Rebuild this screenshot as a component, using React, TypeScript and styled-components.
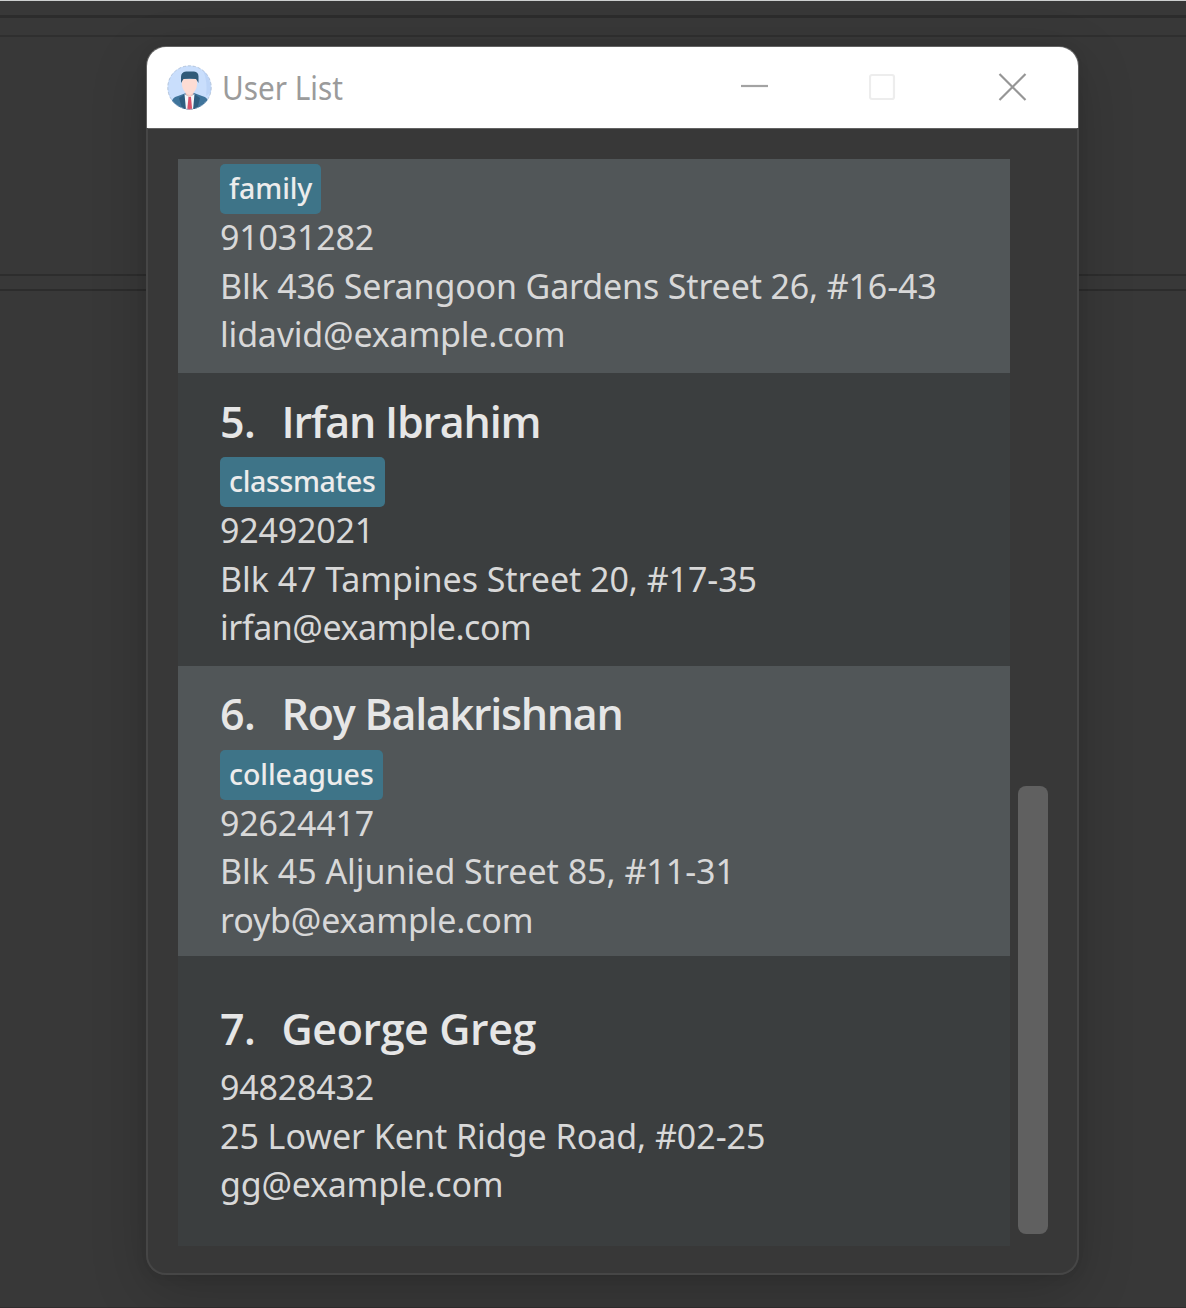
import React from "react";
import styled, { createGlobalStyle } from "styled-components";

const GlobalStyle = createGlobalStyle`
  * { box-sizing: border-box; }
  body {
    margin: 0;
    background: #383838;
    font-family: "Noto Sans", "Open Sans", sans-serif;
  }
`;

const Desktop = styled.main`
  display: grid;
  width: 1186px;
  height: 1308px;
  overflow: hidden;
  background: #383838;
`;

const Backdrop = styled.div`
  grid-area: 1 / 1;
  display: flex;
  flex-direction: column;
  border-top: 1px solid #cdd0d0;
  border-bottom: 1px solid #302d2e;
`;

const Band = styled.div<{ $height: number; $edge: number; $tone: string }>`
  flex: none;
  height: ${(p) => p.$height}px;
  border-bottom: ${(p) => p.$edge}px solid ${(p) => p.$tone};
`;

const Window = styled.section`
  grid-area: 1 / 1;
  z-index: 1;
  display: flex;
  flex-direction: column;
  width: 933px;
  height: 1229px;
  margin: 46px 0 0 146px;
  border-radius: 20px;
  background: #383838;
  box-shadow: 0 16px 56px rgba(0, 0, 0, 0.19), 0 2px 12px rgba(0, 0, 0, 0.08);
`;

const TitleBar = styled.header`
  flex: none;
  display: flex;
  align-items: center;
  height: 81px;
  margin: 1px 1px 0;
  padding: 0 51px 1px 20px;
  border-radius: 19px 19px 0 0;
  background: #fff;
  box-shadow: 0 0 0 1px #626262;
`;

const Avatar = styled.svg`
  flex: none;
  width: 45px;
  height: 45px;
`;

const Title = styled.h1`
  flex: 1;
  margin: 1px 0 0 10px;
  color: #9b9b9b;
  font-size: 33px;
  font-weight: 400;
  line-height: 46px;
  white-space: nowrap;
  transform: scaleX(0.9);
  transform-origin: left;
`;

const Controls = styled.div`
  display: flex;
  gap: 100px;
`;

const ControlIcon = styled.svg<{ $tone: string }>`
  width: 29px;
  height: 29px;
  fill: none;
  stroke: ${(p) => p.$tone};
  stroke-width: 2.2;
`;

const Body = styled.div`
  flex: 1;
  min-height: 0;
  display: flex;
  gap: 8px;
  padding: 31px 29px 27px 30px;
  border: 2px solid #464646;
  border-top: 0;
  border-radius: 0 0 20px 20px;
`;

const List = styled.div`
  display: flex;
  flex-direction: column;
  width: 832px;
  height: 1087px;
  overflow: hidden;
`;

const Cell = styled.article<{ $height: number; $top: number; $light?: boolean }>`
  flex: none;
  display: flex;
  flex-direction: column;
  align-items: flex-start;
  height: ${(p) => p.$height}px;
  padding: ${(p) => p.$top}px 42px 0;
  background: ${(p) => (p.$light ? "#515658" : "#3b3e3f")};
`;

const Name = styled.h2<{ $track?: number }>`
  display: flex;
  margin: 0 0 7.5px;
  color: #e6e6e6;
  font-family: "Open Sans", "Noto Sans", sans-serif;
  font-size: 43px;
  font-weight: 600;
  line-height: 57px;
  letter-spacing: ${(p) => p.$track ?? 0}px;
  white-space: nowrap;
`;

const Index = styled.span`
  width: 61.5px;
  letter-spacing: -0.6px;
`;

const Tag = styled.span<{ $track?: number }>`
  height: 50px;
  padding: 0 9px;
  border-radius: 5px;
  background: #3e7488;
  color: #ececec;
  font-size: 28.5px;
  font-weight: 500;
  line-height: 49px;
  letter-spacing: ${(p) => p.$track ?? 0}px;
`;

const Details = styled.div`
  margin-top: -0.8px;
`;

const Line = styled.p<{ $track?: number }>`
  margin: 0;
  color: #d8d8d8;
  font-size: 34px;
  line-height: 48.6px;
  letter-spacing: ${(p) => p.$track ?? -0.2}px;
  white-space: nowrap;
`;

const ScrollTrack = styled.div`
  display: flex;
  align-items: flex-end;
  width: 30px;
  padding-bottom: 12px;
`;

const ScrollThumb = styled.div`
  width: 30px;
  height: 448px;
  border-radius: 8px;
  background: #606060;
`;

type Spaced = { text: string; track: number };

type Person = {
  index?: number;
  name?: Spaced;
  tag?: Spaced;
  phone: string;
  address: Spaced;
  email: Spaced;
  height: number;
  top: number;
};

const people: Person[] = [
  {
    tag: { text: "family", track: -0.1 },
    phone: "91031282",
    address: { text: "Blk 436 Serangoon Gardens Street 26, #16-43", track: -0.15 },
    email: { text: "lidavid@example.com", track: -0.2 },
    height: 214,
    top: 5,
  },
  {
    index: 5,
    name: { text: "Irfan Ibrahim", track: -1.2 },
    tag: { text: "classmates", track: -0.35 },
    phone: "92492021",
    address: { text: "Blk 47 Tampines Street 20, #17-35", track: -0.06 },
    email: { text: "irfan@example.com", track: -0.46 },
    height: 292.5,
    top: 19.5,
  },
  {
    index: 6,
    name: { text: "Roy Balakrishnan", track: -1.25 },
    tag: { text: "colleagues", track: -0.05 },
    phone: "92624417",
    address: { text: "Blk 45 Aljunied Street 85, #11-31", track: -0.03 },
    email: { text: "royb@example.com", track: -0.17 },
    height: 290.5,
    top: 19.5,
  },
  {
    index: 7,
    name: { text: "George Greg", track: -0.4 },
    phone: "94828432",
    address: { text: "25 Lower Kent Ridge Road, #02-25", track: -0.04 },
    email: { text: "gg@example.com", track: -0.22 },
    height: 290,
    top: 43.5,
  },
];

function AvatarIcon() {
  return (
    <Avatar viewBox="0 0 45 45">
      <defs>
        <clipPath id="face"><circle cx="22.5" cy="22.5" r="22" /></clipPath>
      </defs>
      <g clipPath="url(#face)">
        <rect width="45" height="45" fill="#c9defc" />
        <path d="M36 5q8 8 8 22l-5 4q2-14-3-26Z" fill="#bcd4f7" />
        <path d="M5 36q1-4 6-5l8-3h8l8 3q5 1 6 5v10H5Z" fill="#3f749b" />
        <path d="M12 33l6-4 3.500 16h-6ZM33 33l-6-4-3 16h6Z" fill="#2f5d80" />
        <path d="M17.500 29l5 3 5-3-1.500 16h-7Z" fill="#f4f7fb" />
        <path d="M18.500 24h8v5l-4 4-4-4Z" fill="#f8cdc4" />
        <path d="M15 14h15v6q-.5 7-7.500 10-7-3-7.500-10Z" fill="#fddcd4" />
        <path d="M14 18V12q0-5 5-5.500h8q4.500.5 4.500 5V18l-2.500-4q-6-.6-12.500 0Z" fill="#315a78" />
        <path d="M21.500 32h2.500l1.200 13h-5Z" fill="#d9536a" />
      </g>
      <circle cx="22.500" cy="22.500" r="21.700" fill="none" stroke="#a9b8cc" strokeWidth=".7" strokeDasharray="3 2" />
    </Avatar>
  );
}

export default function App() {
  return (
    <>
      <GlobalStyle />
      <Desktop>
        <Backdrop>
          <Band $height={17} $edge={3} $tone="#2c2c2c" />
          <Band $height={19} $edge={2} $tone="#2f2f2f" />
          <Band $height={239} $edge={2} $tone="#2d2d2d" />
          <Band $height={15} $edge={2} $tone="#2c2c2c" />
        </Backdrop>
        <Window>
          <TitleBar>
            <AvatarIcon />
            <Title>User List</Title>
            <Controls>
              <ControlIcon $tone="#a3a3a3" viewBox="0 0 29 29"><path d="M1 13h27" /></ControlIcon>
              <ControlIcon $tone="#ededed" viewBox="0 0 29 29"><rect x="1" y="2" width="24" height="24" rx="2" /></ControlIcon>
              <ControlIcon $tone="#969696" viewBox="0 0 29 29"><path d="M1.500 1l26 26M27.500 1l-26 26" /></ControlIcon>
            </Controls>
          </TitleBar>
          <Body>
            <List>
              {people.map((p, i) => (
                <Cell key={p.phone} $height={p.height} $top={p.top} $light={i % 2 === 0}>
                  {p.name && (
                    <Name $track={p.name.track}>
                      <Index>{p.index}.</Index>
                      {p.name.text}
                    </Name>
                  )}
                  {p.tag && <Tag $track={p.tag.track}>{p.tag.text}</Tag>}
                  <Details>
                    <Line>{p.phone}</Line>
                    <Line $track={p.address.track}>{p.address.text}</Line>
                    <Line $track={p.email.track}>{p.email.text}</Line>
                  </Details>
                </Cell>
              ))}
            </List>
            <ScrollTrack>
              <ScrollThumb />
            </ScrollTrack>
          </Body>
        </Window>
      </Desktop>
    </>
  );
}
